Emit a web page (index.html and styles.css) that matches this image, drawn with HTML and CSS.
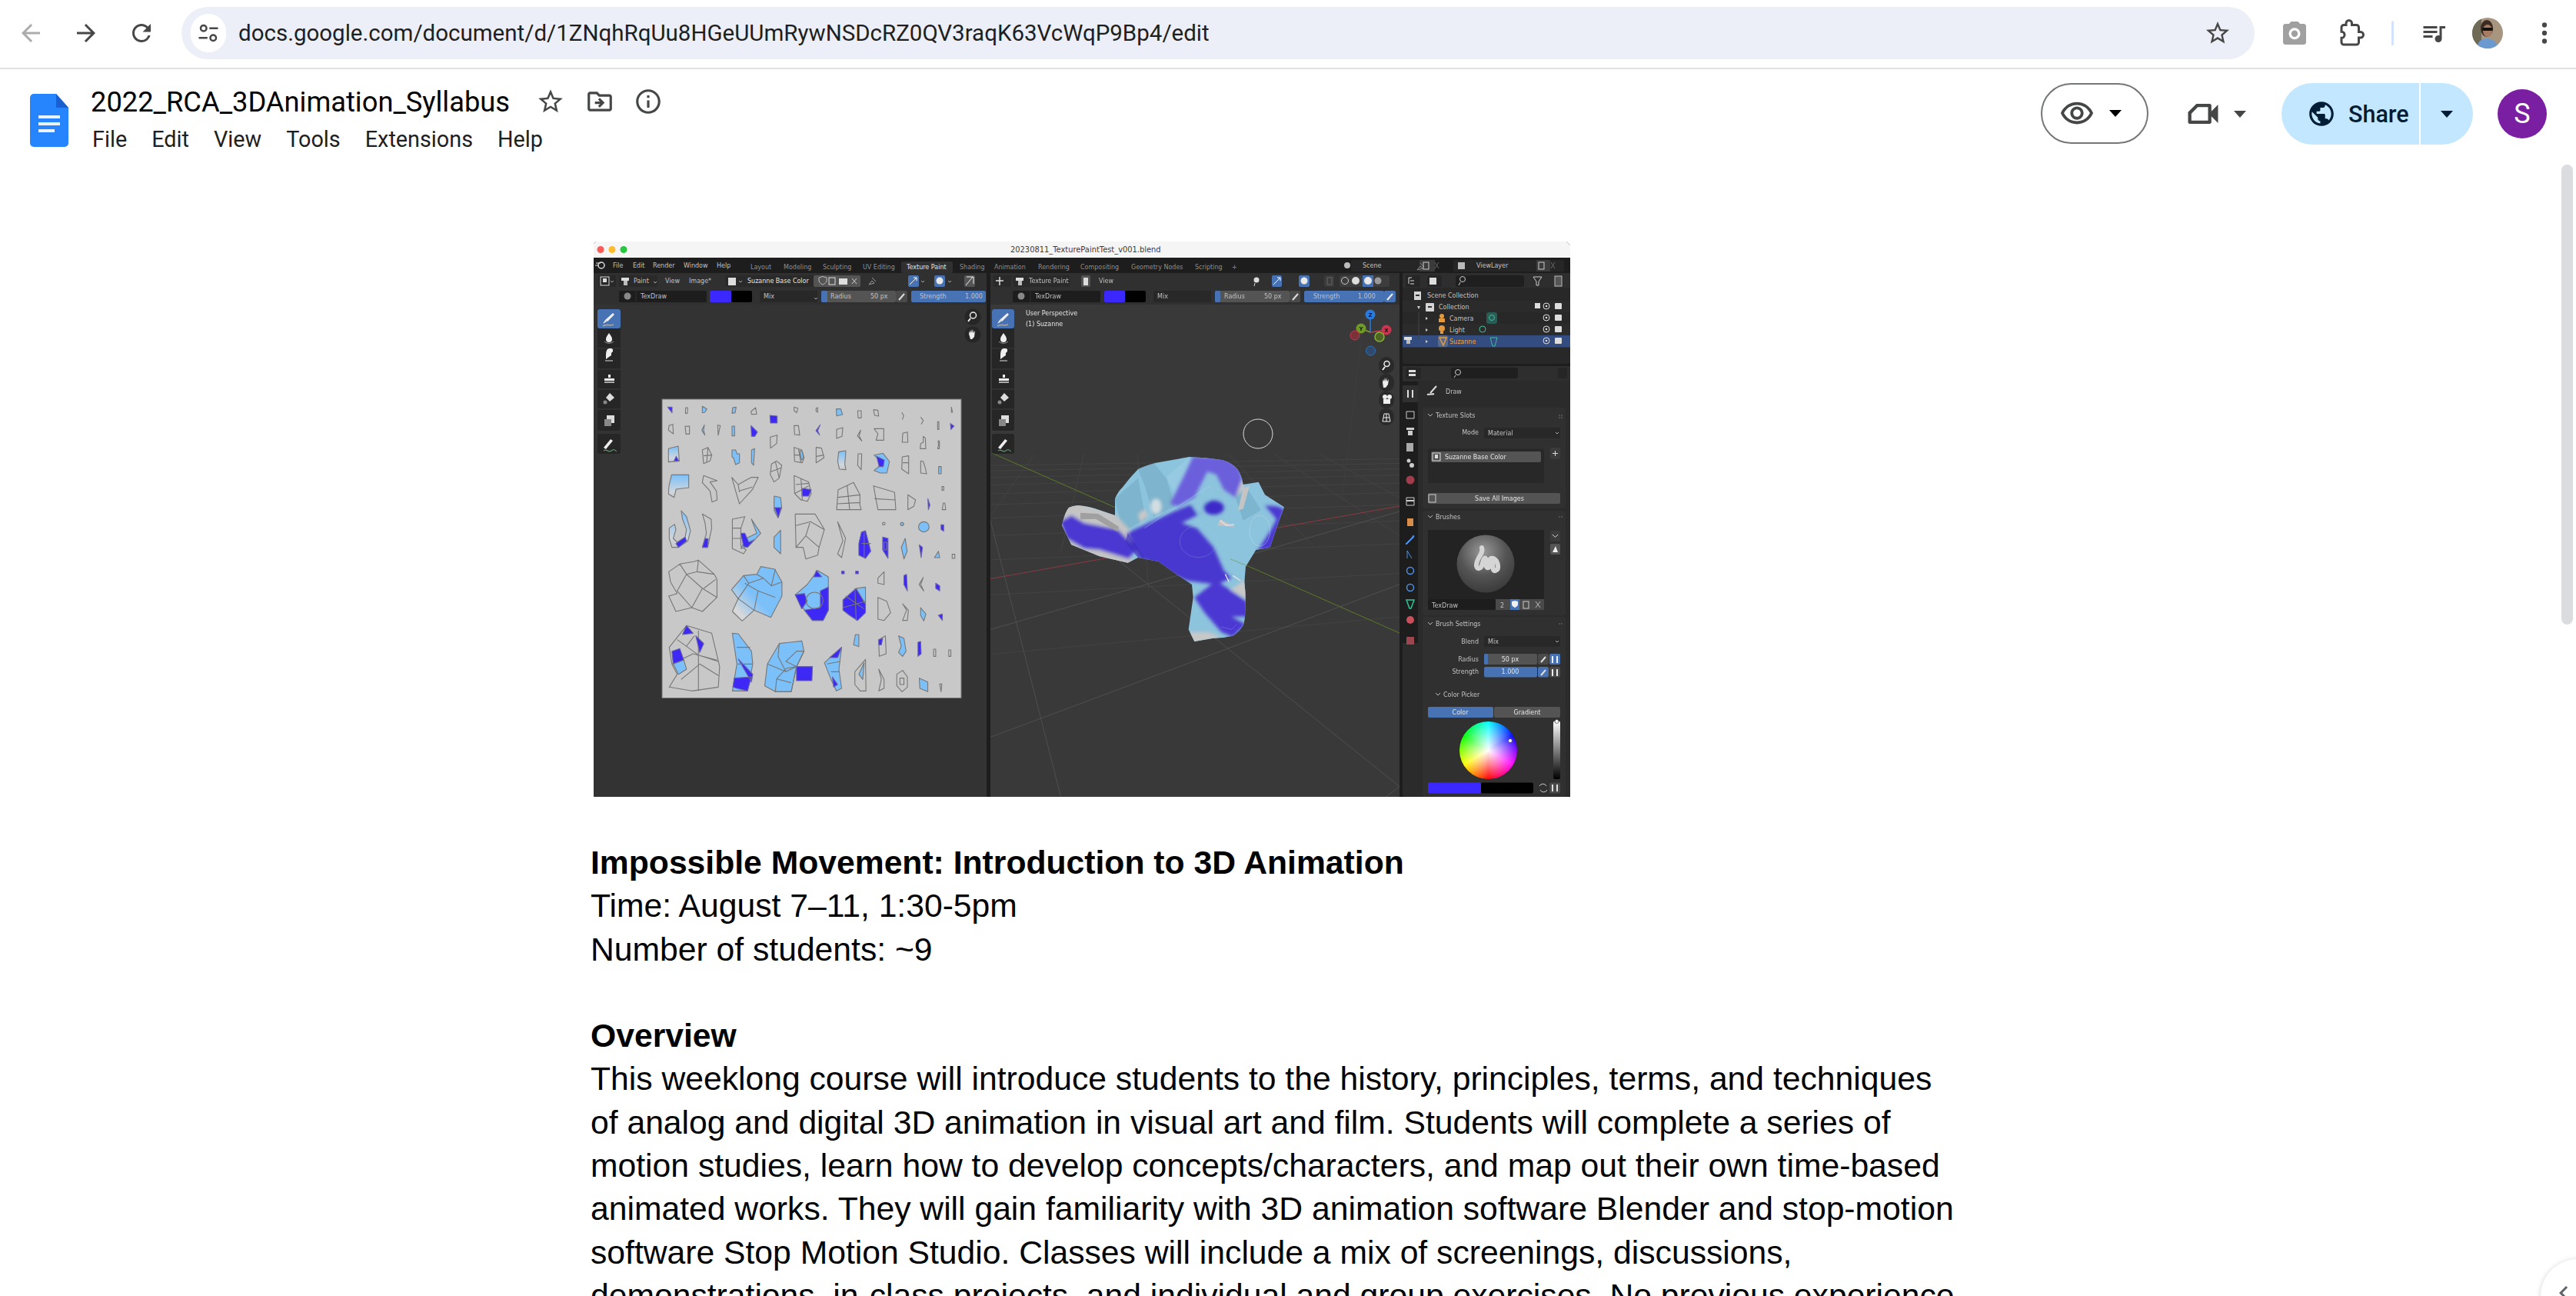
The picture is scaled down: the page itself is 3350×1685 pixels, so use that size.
FILE: index.html
```html
<!DOCTYPE html>
<html lang="en">
<head>
<meta charset="utf-8">
<title>2022_RCA_3DAnimation_Syllabus</title>
<link rel="stylesheet" href="styles.css">
</head>
<body>
<div class="app">
  <header class="chrome">
    <div class="nav">
      <button class="nbtn"><svg class="ic36 dis" viewBox="0 0 24 24"><path d="M20 11H7.83l5.59-5.59L12 4l-8 8 8 8 1.41-1.41L7.83 13H20v-2z"/></svg></button>
      <button class="nbtn"><svg class="ic36" viewBox="0 0 24 24"><path d="M12 4l-1.41 1.41L16.17 11H4v2h12.17l-5.58 5.59L12 20l8-8z"/></svg></button>
      <button class="nbtn"><svg class="ic36" viewBox="0 0 24 24"><path d="M17.65 6.35A7.958 7.958 0 0 0 12 4c-4.42 0-7.99 3.58-7.99 8s3.57 8 7.99 8c3.73 0 6.84-2.55 7.73-6h-2.08A5.99 5.99 0 0 1 12 18c-3.31 0-6-2.69-6-6s2.69-6 6-6c1.66 0 3.14.69 4.22 1.78L13 11h7V4l-2.35 2.35z"/></svg></button>
    </div>
    <div class="omni">
      <span class="chip"><svg class="ic30" viewBox="0 0 24 24"><circle cx="7" cy="7" r="3" fill="none" stroke="#474747" stroke-width="2"/><rect x="13" y="6" width="9" height="2"/><circle cx="17" cy="17" r="3" fill="none" stroke="#474747" stroke-width="2"/><rect x="2" y="16" width="9" height="2"/></svg></span>
      <span class="url">docs.google.com/document/d/1ZNqhRqUu8HGeUUmRywNSDcRZ0QV3raqK63VcWqP9Bp4/edit</span>
      <svg class="ic36 omni-star" viewBox="0 0 24 24"><path d="M22 9.24l-7.19-.62L12 2 9.19 8.63 2 9.24l5.46 4.73L5.82 21 12 17.27 18.18 21l-1.63-7.03L22 9.24zM12 15.4l-3.76 2.27 1-4.28-3.32-2.88 4.38-.38L12 6.1l1.71 4.04 4.38.38-3.32 2.88 1 4.28L12 15.4z"/></svg>
    </div>
    <div class="tools">
      <svg class="ic36 grey" viewBox="0 0 24 24"><path d="M9 2L7.17 4H4c-1.1 0-2 .9-2 2v14c0 1.1.9 2 2 2h16c1.1 0 2-.9 2-2V6c0-1.1-.9-2-2-2h-3.17L15 2H9zm3 15.5a5 5 0 1 1 0-10 5 5 0 0 1 0 10zm0-2.2a2.8 2.8 0 1 0 0-5.6 2.8 2.8 0 0 0 0 5.6z" fill-rule="evenodd"/></svg>
      <svg class="ic36 puzzle" viewBox="0 0 24 24"><path d="M20.5 11H19V7c0-1.1-.9-2-2-2h-4V3.5C13 2.12 11.88 1 10.5 1S8 2.12 8 3.5V5H6c-1.1 0-2 .9-2 2v3.8c1.5 0 2.7 1.2 2.7 2.7S5.500 16.200 4 16.200V20c0 1.100.9 2 2 2h11c1.100 0 2-.9 2-2v-4h1.500c1.380 0 2.500-1.120 2.500-2.500S21.880 11 20.500 11z"/></svg>
      <span class="vdiv"></span>
      <svg class="ic36 music" viewBox="0 0 24 24"><path d="M15 6H3v2h12V6zm0 4H3v2h12v-2zM3 16h8v-2H3v2zM17 6v8.180c-.31-.11-.65-.18-1-.18-1.660 0-3 1.340-3 3s1.340 3 3 3 3-1.340 3-3V8h3V6h-5z"/></svg>
      <svg class="photo" viewBox="0 0 40 40"><defs><clipPath id="pc"><circle cx="20" cy="20" r="20"/></clipPath></defs><g clip-path="url(#pc)"><rect width="40" height="40" fill="#a89580"/><rect width="12" height="40" fill="#6e6a55"/><path d="M6 40c1-10 7-13 13-13s13 3 14 13z" fill="#6b9ad0"/><ellipse cx="19" cy="14" rx="8" ry="11" fill="#3b2b22"/><ellipse cx="20" cy="17" rx="6" ry="8" fill="#a87c62"/><rect x="13" y="13" width="14" height="4" rx="2" fill="#14120f"/></g></svg>
      <svg class="ic36 dots" viewBox="0 0 24 24"><circle cx="12" cy="5" r="2.100"/><circle cx="12" cy="12" r="2.100"/><circle cx="12" cy="19" r="2.100"/></svg>
    </div>
  </header>

  <section class="docbar">
    <svg class="docs-logo" viewBox="0 0 50 69"><path d="M5 0h29l16 18v46a5 5 0 0 1-5 5H5a5 5 0 0 1-5-5V5a5 5 0 0 1 5-5z" fill="#2684fc"/><path d="M34 0l16 18H34z" fill="#1a5fcf"/><rect x="11" y="28" width="28" height="4" fill="#fff" opacity=".9"/><rect x="11" y="37" width="28" height="4" fill="#fff" opacity=".9"/><rect x="11" y="46" width="21" height="4" fill="#fff" opacity=".9"/></svg>
    <div class="titlecol">
      <div class="titlerow">
        <span class="doc-title">2022_RCA_3DAnimation_Syllabus</span>
        <svg class="ic38 tstar" viewBox="0 0 24 24"><path d="M22 9.24l-7.19-.62L12 2 9.19 8.63 2 9.24l5.46 4.73L5.82 21 12 17.27 18.18 21l-1.63-7.03L22 9.24zM12 15.4l-3.76 2.27 1-4.28-3.32-2.88 4.38-.38L12 6.1l1.71 4.04 4.38.38-3.32 2.88 1 4.28L12 15.4z"/></svg>
        <svg class="ic38 tmove" viewBox="0 0 24 24"><path d="M20 6h-8l-2-2H4c-1.100 0-2 .9-2 2v12c0 1.100.9 2 2 2h16c1.100 0 2-.9 2-2V8c0-1.100-.9-2-2-2zm0 12H4V6h5.170l2 2H20v10zm-8.010-9l-1.410 1.410L12.160 12H8v2h4.160l-1.590 1.590L11.990 17 16 13.010 11.990 9z"/></svg>
        <svg class="ic38 tinfo" viewBox="0 0 24 24"><path d="M11 7h2v2h-2zm0 4h2v6h-2zm1-9C6.480 2 2 6.480 2 12s4.480 10 10 10 10-4.480 10-10S17.520 2 12 2zm0 18c-4.410 0-8-3.590-8-8s3.590-8 8-8 8 3.590 8 8-3.590 8-8 8z"/></svg>
      </div>
      <nav class="menu"><span>File</span><span>Edit</span><span>View</span><span>Tools</span><span>Extensions</span><span>Help</span></nav>
    </div>
    <div class="actions">
      <div class="mode"><svg class="ic46" viewBox="0 0 24 24"><path d="M12 6c3.790 0 7.170 2.130 8.820 5.500C19.170 14.870 15.790 17 12 17s-7.170-2.130-8.820-5.500C4.830 8.130 8.210 6 12 6m0-2C7 4 2.730 7.110 1 11.500 2.730 15.890 7 19 12 19s9.270-3.110 11-7.500C21.270 7.110 17 4 12 4zm0 5c1.380 0 2.500 1.120 2.500 2.500S13.380 14 12 14s-2.500-1.120-2.500-2.500S10.620 9 12 9m0-2c-2.480 0-4.500 2.020-4.500 4.500S9.520 16 12 16s4.500-2.020 4.500-4.500S14.480 7 12 7z"/></svg><span class="caret black"></span></div>
      <div class="meet"><svg class="ic52" viewBox="0 0 24 24"><path d="M8 6h8c.55 0 1 .45 1 1v3.500l4-4v11l-4-4V17c0 .55-.45 1-1 1H4c-.55 0-1-.45-1-1v-6zm.85 2L5 11.850V16h10V8z" fill-rule="evenodd"/></svg><span class="caret"></span></div>
      <div class="share">
        <div class="share-main"><svg class="ic38 navy" viewBox="0 0 24 24"><path d="M12 2C6.480 2 2 6.480 2 12s4.480 10 10 10 10-4.480 10-10S17.520 2 12 2zm-1 17.930c-3.950-.49-7-3.850-7-7.930 0-.62.08-1.210.21-1.790L9 15v1c0 1.100.9 2 2 2v1.930zm6.900-2.540c-.26-.81-1-1.390-1.900-1.390h-1v-3c0-.55-.45-1-1-1H8v-2h2c.55 0 1-.45 1-1V7h2c1.100 0 2-.9 2-2v-.41c2.930 1.190 5 4.060 5 7.410 0 2.080-.8 3.970-2.100 5.390z"/></svg><span class="share-label">Share</span></div>
        <div class="share-more"><span class="caret navyc"></span></div>
      </div>
      <div class="acct">S</div>
    </div>
  </section>

  <main class="doc">
    <svg class="shot" viewBox="0 0 1270 722" width="1270" height="722" role="img" aria-label="Blender texture paint workspace">
      <defs>
        <clipPath id="shotclip"><path d="M3 0h1262l5 5v717H0V3z"/></clipPath>
        <clipPath id="vpclip"><rect x="516" y="82" width="532" height="640"/></clipPath>
        <linearGradient id="bf" x1="0" y1="0" x2="0" y2="1"><stop offset="0" stop-color="#7cc0fa"/><stop offset=".75" stop-color="#cfd6dc"/><stop offset="1" stop-color="#c8c8c8"/></linearGradient>
        <linearGradient id="wf" x1="1" y1="0" x2="0" y2="1"><stop offset="0" stop-color="#7cc0fa"/><stop offset=".55" stop-color="#7cc0fa"/><stop offset=".85" stop-color="#d8d8d8"/></linearGradient>
        <linearGradient id="vs" x1="0" y1="0" x2="0" y2="1"><stop offset="0" stop-color="#fff"/><stop offset="1" stop-color="#000"/></linearGradient>
        <radialGradient id="sph" cx=".45" cy=".3" r=".8"><stop offset="0" stop-color="#9a9a9a"/><stop offset=".5" stop-color="#555"/><stop offset="1" stop-color="#333"/></radialGradient>
        <filter id="soft" x="-20%" y="-20%" width="140%" height="140%"><feGaussianBlur stdDeviation="7"/></filter>
        <clipPath id="monk"><path d="M530 42Q600 45 660 55 695 65 718 90 735 115 740 150L800 140 825 190 900 238 870 320 845 395 790 405 750 470 745 530Q752 590 748 640 748 680 740 700 725 725 700 740 660 750 620 750L550 762 527 715 545 590 540 540 480 500 410 450 330 435 290 455 180 430 70 385 33 310Q45 255 60 240 80 230 100 232 140 235 180 250L240 270 240 205Q250 180 270 160 300 120 330 90 360 75 400 65z"/></clipPath>
      </defs>
      <g clip-path="url(#shotclip)">
      <rect width="1270" height="722" fill="#1d1d1d"/>
      <!-- title bar -->
      <rect width="1270" height="21" fill="#f5f5f5"/>
      <circle cx="9" cy="10.500" r="4.500" fill="#fc5b57"/><circle cx="24" cy="10.500" r="4.500" fill="#fdbc2e"/><circle cx="39" cy="10.500" r="4.500" fill="#27c83f"/>
      <text class="bt title" x="542" y="14">20230811_TexturePaintTest_v001.blend</text>
      <!-- top bar -->
      <g class="bt top">
        <text x="25" y="34">File</text><text x="51" y="34">Edit</text><text x="77" y="34">Render</text><text x="117" y="34">Window</text><text x="160" y="34">Help</text>
      </g>
      <rect x="400" y="26" width="67" height="15" rx="2" fill="#303030"/>
      <g class="bt tab">
        <text x="204" y="36">Layout</text><text x="247" y="36">Modeling</text><text x="298" y="36">Sculpting</text><text x="350" y="36">UV Editing</text>
        <text x="476" y="36">Shading</text><text x="521" y="36">Animation</text><text x="578" y="36">Rendering</text><text x="633" y="36">Compositing</text><text x="699" y="36">Geometry Nodes</text><text x="782" y="36">Scripting</text><text x="830" y="36">+</text>
      </g>
      <text class="bt on" x="407" y="36">Texture Paint</text>
      <circle cx="10" cy="31" r="4" fill="none" stroke="#ddd" stroke-width="1.500"/><path d="M3 28h6M2 31h4" stroke="#ddd"/>
      <rect x="985" y="24" width="98" height="15" rx="2" fill="#262626"/><circle cx="980" cy="31" r="4" fill="#bbb"/>
      <rect x="1118" y="24" width="144" height="15" rx="2" fill="#262626"/><rect x="1124" y="27" width="9" height="9" fill="#bbb"/>
      <rect x="1074" y="24" width="20" height="15" fill="#3b3b3b"/><rect x="1226" y="24" width="18" height="15" fill="#3b3b3b"/>
      <path d="M1071 37l4-5 3 3zM1075 28l5 5" fill="none" stroke="#888"/><rect x="1079" y="27" width="7" height="9" fill="none" stroke="#ccc"/><path d="M1094 27l5 8M1099 27l-5 8" stroke="#666"/>
      <rect x="1229" y="27" width="7" height="9" fill="none" stroke="#ccc"/><path d="M1245 27l5 8M1250 27l-5 8" stroke="#666"/>
      <text class="bt top" x="1000" y="34">Scene</text><text class="bt top" x="1148" y="34">ViewLayer</text>

      <!-- left image editor -->
      <rect x="0" y="41" width="511" height="681" fill="#333"/>
      <rect x="0" y="41" width="511" height="41" fill="#303030"/>
      <g>
        <rect x="6" y="44" width="23" height="15" rx="2" fill="#282828"/><rect x="9" y="46" width="11" height="11" fill="none" stroke="#ddd"/><rect x="12" y="48" width="5" height="5" fill="#ddd"/>
        <rect x="33" y="44" width="50" height="15" rx="2" fill="#2a2a2a"/><rect x="36" y="47" width="10" height="4" fill="#ddd"/><rect x="39" y="51" width="5" height="6" fill="#bbb"/>
        <rect x="171" y="44" width="24" height="15" rx="2" fill="#2a2a2a"/><rect x="175" y="47" width="10" height="10" fill="#ddd"/>
        <rect x="195" y="44" width="91" height="15" fill="#2a2a2a"/>
        <rect x="286" y="44" width="61" height="15" rx="2" fill="#545454"/>
        <path d="M293 47l5-1.500 5 1.500v4c0 3-5 5-5 5s-5-2-5-5z" fill="none" stroke="#bbb"/><rect x="306" y="47" width="8" height="9" fill="none" stroke="#ddd"/><rect x="319" y="48" width="11" height="8" fill="#ddd"/><path d="M336 48l6 7M342 48l-6 7" stroke="#ccc"/>
        <path d="M358 56l4-5 3 3zM362 47l5 5" fill="none" stroke="#999"/>
        <rect x="409" y="44" width="14" height="15" rx="2" fill="#4772b3"/><path d="M411 56l9-9M416 47h4v4" stroke="#fff" fill="none"/>
        <rect x="443" y="44" width="14" height="15" rx="2" fill="#4772b3"/><circle cx="450" cy="51" r="4.500" fill="#e8e8e8"/>
        <rect x="482" y="44" width="14" height="15" rx="2" fill="#555"/><path d="M484 57l9-11M485 46h9v9" stroke="#eee" fill="none"/>
        <rect x="33" y="64" width="114" height="15" rx="2" fill="#1d1d1d"/><circle cx="44" cy="71" r="4.500" fill="#888"/><line x1="55" y1="64" x2="55" y2="79" stroke="#303030"/>
        <rect x="151" y="64" width="28" height="15" rx="2" fill="#3b28ff"/><rect x="179" y="64" width="27" height="15" rx="2" fill="#000"/>
        <rect x="216" y="64" width="75" height="15" rx="2" fill="#282828"/>
        <rect x="296" y="64" width="97" height="15" rx="2" fill="#545454"/><rect x="296" y="64" width="8" height="15" rx="2" fill="#4772b3"/>
        <rect x="393" y="64" width="15" height="15" rx="2" fill="#4a4a4a"/><path d="M397 76l7-8" stroke="#ddd" stroke-width="2"/>
        <rect x="413" y="64" width="97" height="15" rx="2" fill="#4772b3"/>
      </g>
      <g class="bt top">
        <text x="52" y="54">Paint</text><text x="93" y="54">View</text><text x="124" y="54">Image*</text><text x="200" y="54" class="on">Suzanne Base Color</text>
        <text x="61" y="74">TexDraw</text><text x="221" y="74">Mix</text><text x="308" y="74">Radius</text><text x="360" y="74">50 px</text><text x="424" y="74">Strength</text><text x="483" y="74">1.000</text>
      </g>
      <g fill="none" stroke="#bbb" stroke-width=".9">
        <path d="M22 51l2 2 2-2M78 52l2 2 2-2M189 51l2 2 2-2M426 51l2 2 2-2M461 51l2 2 2-2M287 73l2 2 2-2"/>
      </g>
      <!-- left tools -->
      <rect x="5" y="88" width="30" height="158" rx="3" fill="#262626"/>
      <rect x="5" y="88" width="30" height="25" rx="3" fill="#4772b3"/>
      <path d="M5 139h30M5 166h30M5 192h30M5 218h30" stroke="#3a3a3a"/>
      <rect x="5" y="250" width="30" height="26" rx="3" fill="#262626"/>
      <g class="tl" id="toolicons">
        <path d="M12 107l3-5 2 2zM15 102l10-9 2 2-9 9z" fill="#eee"/><path d="M12 110c5-3 10 0 14-2" stroke="#aaa" fill="none" stroke-width="1.500"/>
        <path d="M20 119c3 4 4 6 4 8a4 4 0 0 1-8 0c0-2 1-4 4-8z" fill="#eee"/><path d="M14 130c3 3 9 3 12 0" stroke="#999" fill="none"/>
        <path d="M16 153c0-9 0-14 5-14s4 2 4 4l-2 2v3l-3 2z" fill="#eee"/><path d="M15 155h10" stroke="#ddd"/>
        <path d="M19 173h3v4h-3zM14 178h13v3H14z" fill="#eee"/><rect x="14" y="182" width="13" height="2" fill="#aaa"/>
        <path d="M21 197l6 6-6 5-5-5z" fill="#ddd"/><circle cx="15" cy="209" r="2.500" fill="#888"/>
        <rect x="17" y="226" width="10" height="10" fill="#ddd"/><rect x="14" y="231" width="9" height="9" fill="#888"/>
        <path d="M13 268l9-11 3 2-9 11z" fill="#eee"/><path d="M13 272c4-3 6 3 10 0s5 0 7 1" stroke="#7fbf90" fill="none"/>
      </g>
      <circle cx="493" cy="98" r="10.500" fill="#262626"/><circle cx="493.500" cy="96" r="4" fill="none" stroke="#eee" stroke-width="1.500"/><path d="M490 100l-3 4" stroke="#eee" stroke-width="2"/>
      <circle cx="493" cy="121" r="10.500" fill="#262626"/><path d="M488 120l1-4 1 3 1-5 1 5 1-5 1 5 2-3-1 8-3 3h-2z" fill="#eee"/>

      <!-- UV image -->
      <rect x="89" y="205" width="389" height="388.500" fill="#c8c8c8" stroke="#777"/>
      <g transform="translate(88 196) scale(.33333)" class="uv">
        <path class="p" d="M25 58h17v22z"/><path d="M95 60h8l-1 22h-8z"/><path class="b" d="M160 55l18 10-8 13-10 2z"/><path class="b" d="M278 60l14-2-4 22-12 2z"/><path d="M350 75l18-15 4 25-20 1z"/>
        <path class="p" d="M424 90l28 3v27h-26z"/><path d="M518 58l15 4-5 18-10-8z"/><path d="M604 62l6-2v18l-6-4z"/><path class="b" d="M683 65h17l7 22-23 5z"/><path d="M766 72h14v28h-12z"/><path d="M828 68l17 2 3 23-16-3z"/>
        <path d="M938 78l8 14-6 15M1012 97l10 13-8 15M1132 58l4 20h-4z"/>
        <path d="M30 130l15-5 2 37-19-14z"/><path d="M93 133l17-1v31H96z"/><path class="b" d="M168 128l-10 20 12 19-5-19z"/><path d="M220 128l10 2-8 38z"/><path class="b" d="M276 132h10v38h-10z"/><path class="p" d="M350 130l25 25-10 17h-13z"/>
        <path d="M518 130h17l5 37-20-2z"/><path class="p" d="M620 127l-17 23 15 17-8-17z"/><path d="M684 145l24-7-3 34-21 8z"/><path d="M778 148l-13 22 17 20-10-20z"/><path d="M830 142h38v45h-30l7-25z"/>
        <path d="M942 160l18-5 2 40h-22z"/><path d="M1022 172l8 6 2 42h-22l2-20 10-5z"/><path d="M1078 115h5v30h-5z"/><path class="p" d="M1128 122l14 10-12 13z"/><path d="M1080 190h5v30h-7l4-15z"/><path d="M425 175l27-8-2 33-24 18z"/>
        <path class="bf" d="M28 220l38-10 4 58-42 4z"/><path class="p" d="M58 250l10 18H50z"/><path d="M160 225l22-10 15 30-7 23-25 10zM165 248l30-3M182 215l-5 60"/><path class="b" d="M276 225h14l5 15h10v35l-15 7-8-25-6-5z"/><path class="b" d="M352 225l12-5-4 65-8-10z"/>
        <path d="M430 280l20-12 20 17-10 50-20 15-15-30zM428 310l40-15M445 270l15 65"/><path d="M518 215l30 10 9 30-7 20-30-5zM520 245l35 0M535 220l10 55"/><path class="b" d="M540 228l10 2 5 25-8 10z"/><path d="M604 215l21 3 10 37-31 20zM605 250l30-5"/><path class="bf" d="M692 232l28-4-4 52 4 22-25-2-7-30z"/><path d="M768 240h14l-2 62-14-17z"/>
        <path class="b" d="M830 245l35-7 25 32-10 45h-25l-25-10 25-20-5-20z"/><path class="p" d="M840 250l30 15-4 25h-16z"/><path d="M940 252l25-4v70l-27-18zM942 275l22 0"/><path d="M1012 268l10 2 8 25 5 23-23-3z"/><path class="b" d="M1082 290h10v28h-10z"/>
        <path class="bf" d="M30 365l10-43 67 0v50l-49 6-8 32-22-13z"/><path d="M165 325l53 20-28 5 25 35 3 35-20 8-8-43-30-33z"/><path d="M275 332l25 28 50-28h28l-23 48-50 55-15-50z"/><path d="M300 360l5 30M305 385l50-15"/>
        <path d="M518 325l57 25 10 45-15 30-25-5-25-25zM525 360l50-5M520 395l55-30M545 335l5 85"/><path class="p" d="M550 375l35 5-10 25-25 0z"/><path class="b" d="M440 405l25 5 5 40-15 40-15-30z"/><path class="p" d="M442 450h25l-10 38z"/>
        <path d="M690 380l60-28 25 48v40l5 18h-96zM690 410l85-10M686 435l90-5M725 365l10 93"/><path d="M828 365l82 25 5 68h-70zM832 415l82 5"/><path d="M962 400l30 20-7 25-23 13z"/><path class="p" d="M1040 415l8 25-6 18z"/><path d="M1095 368h7v14h-7z"/><path d="M1100 432h6l4 26h-14z"/>
      </g>
      <g transform="translate(-12 336) scale(.34483 .33333)" class="uv">
        <path class="bf" d="M365 42l20 23 15 55-10 40-35 25h-25l-10-35v-40l20-15 5 20-10 35 15 15 30-20 5-30-15-40z"/><path class="p" d="M345 170l35-25 5 15-30 25z"/>
        <path d="M445 55l33 20 2 35-15 75h-20l15-55-5-40z"/><path class="p" d="M455 150l12 2-3 33h-19z"/>
        <path d="M558 75l47-10-15 45v70l20 15-10 15-42-20zM560 110h30M560 150h30"/><path class="b" d="M630 75l35 55-45 50-30 10 20-40 40-20z"/><path class="p" d="M590 130l10 50 15 5 25-30-20 10-15-35z"/><path class="b" d="M715 145l25-27v92l-25-25z"/>
        <path d="M795 55h75l35 60-20 70-5 30-45 15-10-45h-27zM798 100l55-15 50 30M850 90l-15 50-37 45M835 140l50 45"/>
        <path d="M955 85l30 65-15 75-15-15 20-50z"/><path class="p" d="M1045 125l15-5 20 80-20 28-25-13v-45z"/><path d="M1045 170l35 0M1055 125v100"/>
        <circle class="b" cx="1280" cy="105" r="20"/><circle cx="1129" cy="92" r="5"/><circle class="b" cx="1198" cy="94" r="6"/><path class="p" d="M1345 97h10v25l-10-7z"/>
        <path class="p" d="M1125 145l20 5v78l-20-33z"/><path fill="#fff" d="M1130 165h10v30h-10z"/><path class="b" d="M1195 185l15-35 7 50-12 30z"/><path class="p" d="M1263 175l12 10-5 40z"/><path class="b" d="M1320 225l15-25 5 25z"/><path d="M1387 212h10v16h-10z"/>
        <path class="w" d="M318 280l42-30 55-10 15-5 60 55 10 20v70l-55 55-40-15-60 15-27-60 32-10-25-45zM360 250l25 40 40-10M385 290l-35 65 55 65 40-75-60-55M445 345l55 35M430 235l-5 45 65 10M495 310l-45 35"/>
        <path class="wf" d="M555 350l45-55 50-5 15-30 53 10 27 50v55l-42 83-63-28-45 42-37-37 22-50z"/><path d="M600 295l20 30-40 60 60 45 15-75-50-30M620 325l55-20 30 30 40-15M655 355l65 25M705 335l15-65M650 290l25 15"/>
        <path class="b" d="M795 370l45-40 40-55 40 25v130l-20 40h-40l-30-40z"/><path class="p" d="M795 370l35-5 10 30-20 30zM890 355l30-15v90l-20 40h-40l-30-40 60-10zM875 275l20 25h-30z"/><circle cx="868" cy="392" r="32" fill="#dcdcdc" stroke="#777"/>
        <path class="p" d="M975 390l50-45 35 60v35l-30 30-30-20-25-20z"/><path class="b" d="M1025 345l35-5v65z"/><path d="M985 375l70 50M1020 345l5 125M975 420l85-25"/><path class="p" d="M970 278h10v10h-10zM1023 278h10v10h-10z"/>
        <path d="M1130 280v50l-23-5v-20z"/><path class="p" d="M1205 295l10-5 3 65-13-25z"/><path d="M1278 302l-16 28 18 25-12-25z"/><path class="p" d="M1325 325l15 10v20l-15-10z"/><path d="M1107 380l33 15 15 45-25 30-23-5z"/><path d="M1200 405l22 25-4 40h-18l15-40z"/><path class="b" d="M1268 420l20 25-8 27-12-22z"/><path class="p" d="M1335 450l15-5v25z"/>
        <path d="M320 575l65-85 95 30 30 130-5 80-100 15-85-15 30-50-20-40z"/><path d="M350 545l80 60 75 25M430 510v235M330 640l80-40 90 25M365 700l70-60 70 45M385 570l30-40"/><path class="p" d="M330 590l30-10 15 45-40 15zM385 490l25 30-40 5zM420 530l30 30-15 35z"/><path class="b" d="M335 640l40-15 10 35-30 20z"/>
        <path class="b" d="M558 520l22 2 50 68 5 50-20 105h-57l17-105z"/><path class="p" d="M580 620l55 60-5 30zM565 695l65-5-15 55-40-10-15-5z"/><path d="M575 575l50 0M578 640h55"/>
        <path class="b" d="M735 560l85-10 8 40-28 60-20 98h-60l-40-23 10-85z"/><path fill="#fff" d="M800 650l-20 98h-60l5-50 35-40zM760 630l40-40 28 0-28 60z"/><path class="p" d="M800 650h60l-2 55h-58z"/><path d="M735 560l-5 50 30 60 40-20M690 640l70 30M725 698l55 15"/>
        <path class="b" d="M905 635l65-60-10 85 10 75-20 10-20-45z"/><path class="p" d="M925 615l45-40-15 40zM935 690l20 30-15 10z"/><path d="M915 640l50-10M930 670l30 0"/>
        <path class="b" d="M1022 525h13v47l-20-7z"/><path d="M1110 545l25-15 3 70-26 10z"/><path class="p" d="M1110 545l15-5-5 25h-10z"/><path class="b" d="M1185 530l20 10 8 50-13 20-15-15 10-25z"/><path class="p" d="M1258 555l10-3 2 48-12 10z"/><path d="M1317 582h8v28h-8zM1374 585h8v25h-8z"/>
        <path d="M1020 670l40-48 2 123h-22l-20-25z"/><path class="b" d="M1035 680l20-45-5 65z"/><path d="M1110 660l20 40v35l-20 10 10-45z"/><path d="M1178 680l22-15 18 25v40l-20 18-20-23zM1190 695h15v25h-15z"/><path class="b" d="M1263 695l32 15v38l-30-13z"/><path d="M1340 718h8l-3 30z"/>
      </g>

      <rect x="511" y="41" width="5" height="681" fill="#1d1d1d"/>

      <!-- viewport -->
      <rect x="516" y="41" width="532" height="681" fill="#393939"/>
      <g clip-path="url(#vpclip)" fill="none">
        <g transform="translate(508 186) scale(.49751 .35088)" class="gridm">
          <path d="M10 300L1086 275M10 320L1086 292M10 345L1086 312M10 372L1086 335M10 405L1086 365M10 445L1086 400M10 495L1086 445M10 560L1086 505M10 650L1086 590M10 780L1086 700M10 1000L1086 860"/>
          <path d="M130 260L10 500M260 260L200 620M400 260L430 760M520 260L640 660M640 260L860 600M760 260L1086 560M880 260L1086 420M20 260L10 270"/>
        </g>
        <g transform="translate(508 186) scale(.49751 .35088)" class="gridM">
          <path d="M10 470L200 1527M10 910L1086 470M10 1310L1086 740M340 640L1086 1490M1086 1490L1050 1527"/>
        </g>
        <path d="M513 439L1048 344" stroke="#8b3a44" stroke-width="1"/>
        <path d="M518 275L1048 509" stroke="#5a7a28" stroke-width="1"/>
        <path d="M1003 90L973 336" stroke="#3f3f3f"/>
      </g>
      <rect x="516" y="41" width="532" height="41" fill="#303030"/>
      <g>
        <rect x="520" y="44" width="23" height="15" rx="2" fill="#2a2a2a"/><path d="M528 46v11M523 51h10" stroke="#ddd" stroke-width="1.500"/>
        <rect x="546" y="44" width="73" height="15" rx="2" fill="#2a2a2a"/><rect x="549" y="47" width="10" height="4" fill="#ddd"/><rect x="552" y="51" width="5" height="6" fill="#bbb"/>
        <rect x="634" y="44" width="12" height="15" rx="2" fill="#545454"/><rect x="637" y="47" width="6" height="10" fill="#ddd"/>
        <circle cx="862" cy="50" r="3.500" fill="#ddd"/><path d="M860 54l-1 4" stroke="#ddd"/>
        <rect x="882" y="44" width="13" height="15" rx="2" fill="#4772b3"/><path d="M884 56l9-9M889 47h4v4" stroke="#fff" fill="none"/>
        <rect x="917" y="44" width="14" height="15" rx="2" fill="#4772b3"/><circle cx="924" cy="51" r="4.500" fill="#e8e8e8"/>
        <rect x="950" y="44" width="13" height="15" rx="2" fill="#3b3b3b"/><rect x="954" y="47" width="6" height="9" fill="none" stroke="#666"/>
        <rect x="970" y="44" width="65" height="15" rx="2" fill="#3d3d3d"/><rect x="1000" y="44" width="14" height="15" fill="#4772b3"/>
        <circle cx="977" cy="51" r="4.500" fill="none" stroke="#ccc"/><circle cx="991" cy="51" r="5" fill="#ddd"/><circle cx="1007" cy="51" r="5" fill="#e8e8e8"/><circle cx="1020" cy="51" r="4.500" fill="#999"/>
        <rect x="545" y="64" width="114" height="15" rx="2" fill="#1d1d1d"/><circle cx="556" cy="71" r="4.500" fill="#888"/><line x1="568" y1="64" x2="568" y2="79" stroke="#303030"/>
        <rect x="664" y="64" width="27" height="15" rx="2" fill="#3b28ff"/><rect x="691" y="64" width="27" height="15" rx="2" fill="#000"/>
        <rect x="728" y="64" width="75" height="15" rx="2" fill="#282828"/>
        <rect x="808" y="64" width="97" height="15" rx="2" fill="#545454"/><rect x="808" y="64" width="7" height="15" rx="2" fill="#4772b3"/>
        <rect x="905" y="64" width="14" height="15" rx="2" fill="#4a4a4a"/><path d="M909 76l7-8" stroke="#ddd" stroke-width="2"/>
        <rect x="924" y="64" width="104" height="15" rx="2" fill="#4772b3"/><rect x="1028" y="64" width="15" height="15" rx="2" fill="#4772b3"/><path d="M1032 76l7-8" stroke="#eee" stroke-width="2"/>
      </g>
      <g class="bt top">
        <text x="566" y="54">Texture Paint</text><text x="657" y="54">View</text>
        <text x="574" y="74">TexDraw</text><text x="733" y="74">Mix</text><text x="820" y="74">Radius</text><text x="872" y="74">50 px</text><text x="936" y="74">Strength</text><text x="994" y="74">1.000</text>
      </g>
      <g class="bt on"><text x="562" y="96">User Perspective</text><text x="562" y="110">(1) Suzanne</text></g>
      <!-- viewport tools -->
      <rect x="518" y="88" width="29" height="158" rx="3" fill="#262626"/>
      <rect x="518" y="88" width="29" height="25" rx="3" fill="#4772b3"/>
      <path d="M518 139h29M518 166h29M518 192h29M518 218h29" stroke="#3a3a3a"/>
      <rect x="518" y="250" width="29" height="26" rx="3" fill="#262626"/>
      <use href="#toolicons" x="513"/>
      <!-- gizmo -->
      <g>
        <path d="M1010 118V95" stroke-width="1.500" fill="none" stroke="#2a7be0"/>
        <path d="M1010 118L998 113" stroke="#7ca030" stroke-width="1.500"/><path d="M1010 118l21-3" stroke="#c23a4e" stroke-width="1.500"/>
        <circle cx="1010" cy="95" r="6.500" fill="#2a7be0"/><circle cx="998" cy="113" r="6.500" fill="#6f9a28"/><circle cx="1031" cy="115" r="6.500" fill="#c93550"/>
        <circle cx="990" cy="122" r="6" fill="#7a3138" stroke="#c93550"/><circle cx="1022" cy="124" r="6" fill="#4e6424" stroke="#8ab534" stroke-width="1.500"/><circle cx="1010.500" cy="142" r="6" fill="#2f4a6c" stroke="#2a70c4"/>
        <text class="bt giz" x="1010" y="98" text-anchor="middle">Z</text><text class="bt giz" x="998" y="116" text-anchor="middle">Y</text><text class="bt giz" x="1031" y="118" text-anchor="middle">X</text>
      </g>
      <rect x="1021" y="150" width="20" height="22" rx="10" fill="#2a2a2a"/><circle cx="1031.500" cy="159" r="3.500" fill="none" stroke="#eee" stroke-width="1.500"/><path d="M1029 163l-3 4" stroke="#eee" stroke-width="2"/>
      <rect x="1021" y="172" width="20" height="23" rx="10" fill="#2a2a2a"/><path d="M1026 183l1-4 1 3 1-5 1 5 1-5 1 5 2-3-1 7-3 4h-3z" fill="#eee"/>
      <rect x="1021" y="195" width="20" height="22" rx="10" fill="#2a2a2a"/><circle cx="1029" cy="202" r="3" fill="#eee"/><circle cx="1035" cy="202" r="3" fill="#eee"/><rect x="1027" y="205" width="9" height="6" fill="#eee"/>
      <rect x="1021" y="217" width="20" height="22" rx="10" fill="#2a2a2a"/><path d="M1026 234l2-10h6l2 10zM1027 229h8M1031 224v10" fill="none" stroke="#eee"/>
      <ellipse cx="864" cy="250" rx="19" ry="19" fill="none" stroke="#ddd" stroke-width="1"/>

      <!-- monkey -->
      <g transform="translate(598 266) scale(.33333)">
        <g clip-path="url(#monk)">
          <rect width="960" height="810" fill="#8cc3dd"/>
          <path d="M240 205l90-80 30 160-90 50zM330 90l60-25 50 60-80 40zM360 165l80-40 35 110-85 40z" fill="#5f94ac" opacity=".32"/>
          <path d="M700 170l60 0 50 80-70 40z" fill="#5f94ac" opacity=".3"/>
          <path d="M440 120L530 42l40 120-80 60z" fill="#a8d6ea" opacity=".35"/>
          <g filter="url(#soft)">
            <ellipse cx="400" cy="235" rx="22" ry="30" fill="#d2dde2"/>
            <path d="M20 225L100 220 240 265 300 330 310 470 180 450 60 405 20 350z" fill="#c4c4c4"/>
            <path d="M515 725l90 0 50 20-110 30zM690 560l60-40 10 80zM700 110l40 30 5 30-40 30-25-40zM340 300l30-30-15-25-25 20z" fill="#c8c8c8"/>
            <path d="M25 295l45-25 50 30 130 25 75 75-30 40-115-35-60-5-70-40z" fill="#4b38d2"/>
            <path d="M545 40l125 5 58 40 7 45-25 70-45-30-30-60-35-10-50 100-65 35-30-10 55-110z" fill="#6c5fdc"/>
            <path d="M285 340L360 305l110-50 75-30 35 35-80 40 60 20 65 75 40 90 30 30-60 25-115-15-75-30-105-60z" fill="#4a37cf"/>
            <path d="M535 225l65-20 5 30-40 35z" fill="#8cc3dd"/>
            <ellipse cx="625" cy="240" rx="40" ry="28" fill="#3c29c8"/>
            <path d="M550 590l85-65 60 40 65 45v55h-65l55 30-50 50-45-20-65-75z" fill="#4b38d2"/>
            <path d="M825 232l45 3 30 10-45 155-60 10 55-85 20-40z" fill="#4b38d2"/>
          </g>
          <path d="M105 260l70 4 80 50-5 20-85-50-60 2z" fill="#a0a0a0"/>
          <path d="M720 250l20-85 25-10-25 90zM650 285l60 30-70-5z" fill="#c4c4c4"/>
          <path d="M290 340l70 100-30-5-50-60z" fill="#3c2cbd" opacity=".6"/>
          <path d="M355 320l200-130 60-35" stroke="#a7dcef" stroke-width="2" fill="none" opacity=".7"/>
          <path d="M600 160l60 10 10 60M575 170l30-10" stroke="#c9c6ee" fill="none" opacity=".5"/>
          <ellipse cx="565" cy="372" rx="72" ry="62" fill="none" stroke="#a8d8ea" stroke-width="1.500" opacity=".45"/>
          <ellipse cx="805" cy="330" rx="40" ry="60" fill="none" stroke="#cfe5ef" stroke-width="2" opacity=".55"/>
          <path d="M650 290l25 20 30-5M700 505l30 20M670 500l15 30" stroke="#e4e4e4" stroke-width="4" fill="none"/>
          <path d="M690 440L980 560" stroke="#6d8b2c" stroke-width="2" opacity=".8"/>
          <path d="M655 705l40 10 20-20" stroke="#a8a4e8" fill="none"/>
        </g>
      </g>

      <rect x="1048" y="41" width="222" height="681" fill="#1d1d1d"/>
      <!-- outliner -->
      <rect x="1052" y="41" width="218" height="118" rx="3" fill="#282828"/>
      <rect x="1052" y="41" width="218" height="19" fill="#2e2e2e"/>
      <rect x="1052" y="77" width="218" height="15" fill="#2b2b2b"/><rect x="1052" y="107" width="218" height="15" fill="#2b2b2b"/>
      <rect x="1052" y="122" width="218" height="15.500" fill="#334d80"/>
      <rect x="1056" y="44" width="19" height="15" rx="2" fill="#262626"/><path d="M1060 47h4M1062 51h5M1062 55h5M1060 47v8" stroke="#ddd" fill="none"/>
      <rect x="1084" y="44" width="19" height="15" rx="2" fill="#262626"/><rect x="1087" y="47" width="9" height="9" fill="#ddd"/>
      <rect x="1121" y="44" width="89" height="15" rx="3" fill="#1f1f1f"/><circle cx="1130" cy="49" r="3.500" fill="none" stroke="#ccc"/><path d="M1127 53l-2 4" stroke="#ccc"/>
      <path d="M1222 46h11l-4 6v5h-3v-5z" fill="none" stroke="#ccc"/><rect x="1250" y="45" width="9" height="13" fill="#555" stroke="#bbb"/>
      <g class="bt top"><text x="1084" y="73">Scene Collection</text><text x="1099" y="88">Collection</text><text x="1113" y="103">Camera</text><text x="1113" y="118">Light</text></g>
      <text class="bt sel" x="1113" y="133">Suzanne</text>
      <rect x="1067" y="65" width="9" height="11" fill="#d5d5d5"/><rect x="1069" y="69" width="5" height="2" fill="#333"/><rect x="1082" y="80" width="11" height="11" rx="1" fill="#d5d5d5"/><rect x="1085" y="84" width="5" height="2" fill="#333"/>
      <path d="M1075 84l2 4 2-4zM1086 98v4l3-2zM1086 113v4l3-2zM1086 128v4l3-2z" fill="#ccc" transform="translate(-4 0)"/>
      <circle cx="1103" cy="97" r="3" fill="#e39a3e"/><rect x="1099" y="100" width="8" height="5" fill="#e39a3e"/>
      <rect x="1161" y="92" width="14" height="15" rx="3" fill="#2a5c55"/><circle cx="1168" cy="99" r="3.500" fill="none" stroke="#3fbfa0"/>
      <circle cx="1103" cy="113" r="4" fill="#e39a3e"/><rect x="1101" y="117" width="4" height="3" fill="#e39a3e"/><circle cx="1156" cy="114" r="4" fill="none" stroke="#3fbfa0"/>
      <rect x="1098" y="122" width="13" height="15" rx="3" fill="#5a6a8a"/><path d="M1100 125h9l-4 10z" fill="none" stroke="#e39a3e" stroke-width="1.500"/><path d="M1166 125h9l-3 11h-3z" fill="none" stroke="#3fbfa0"/>
      <rect x="1054" y="124" width="10" height="4" fill="#ddd"/><rect x="1057" y="128" width="5" height="5" fill="#bbb"/>
      <path d="M1224 80h7v7h-7z" fill="#ddd"/>
      <g fill="none" stroke="#ddd"><circle cx="1239" cy="84" r="4"/><circle cx="1239" cy="99" r="4"/><circle cx="1239" cy="114" r="4"/><circle cx="1239" cy="129" r="4"/></g>
      <g fill="#ddd"><circle cx="1239" cy="84" r="1.300"/><circle cx="1239" cy="99" r="1.300"/><circle cx="1239" cy="114" r="1.300"/><circle cx="1239" cy="129" r="1.300"/><rect x="1250" y="80" width="9" height="8" rx="1"/><rect x="1250" y="95" width="9" height="8" rx="1"/><rect x="1250" y="110" width="9" height="8" rx="1"/><rect x="1250" y="125" width="9" height="8" rx="1"/></g>
      <path d="M1073 92v35" stroke="#444"/>

      <!-- properties -->
      <rect x="1052" y="162" width="218" height="560" rx="3" fill="#2b2b2b"/>
      <rect x="1052" y="162" width="218" height="19" fill="#2e2e2e"/>
      <rect x="1056" y="164" width="20" height="15" rx="2" fill="#262626"/><rect x="1060" y="167" width="9" height="3" fill="#ddd"/><rect x="1060" y="172" width="9" height="3" fill="#ddd"/>
      <rect x="1115" y="164" width="87" height="14" rx="3" fill="#1f1f1f"/><circle cx="1124" cy="170" r="3.500" fill="none" stroke="#ccc"/><path d="M1121 174l-2 3" stroke="#ccc"/>
      <rect x="1254" y="164" width="12" height="14" rx="2" fill="#262626"/>
      <rect x="1052" y="182" width="20" height="340" fill="#1d1d1d"/>
      <rect x="1052" y="187" width="20" height="22" fill="#303030"/>
      <g fill="#bbb">
        <path d="M1058 193h2v10h-2zM1064 193h2v10h-2z" fill="#ddd"/>
        <path d="M1057 221h10v9h-10z" fill="none" stroke="#ccc"/><path d="M1057 242h10v3h-10zM1059 246h6v6h-6z" fill="#ccc"/>
        <path d="M1057 262h9v11h-9z" fill="#aaa"/><circle cx="1060" cy="285" r="2.500" fill="#ccc"/><circle cx="1064" cy="291" r="3" fill="#ccc"/>
        <circle cx="1062" cy="310" r="5.500" fill="#a03c4c"/><path d="M1057 333h10v10h-10z" fill="none" stroke="#ccc"/><rect x="1057" y="336" width="10" height="2" fill="#ccc"/>
        <rect x="1058" y="360" width="8" height="10" fill="#d98d4a"/><path d="M1056 393l8-8 2-3 1 2-2 2-8 8z" fill="#4f8fe0" stroke="#4f8fe0"/>
        <path d="M1058 402l6 10M1058 402v10" stroke="#4f8fe0" fill="none"/><circle cx="1062" cy="428" r="4.500" fill="none" stroke="#4f8fe0" stroke-width="1.500"/><circle cx="1062" cy="450" r="4.500" fill="none" stroke="#4f8fe0" stroke-width="1.500"/>
        <path d="M1057 466h10l-4 11h-2z" fill="none" stroke="#2fc79a" stroke-width="1.500"/><circle cx="1062" cy="492" r="5" fill="#c9505a"/>
        <rect x="1057" y="514" width="10" height="10" fill="#9c4650"/>
      </g>
      <path d="M1088 197l8-9M1084 199c3-1 7 0 9-1" stroke="#ddd" stroke-width="2" fill="none"/>
      <text class="bt top" x="1108" y="198">Draw</text>
      <!-- panels -->
      <rect x="1078" y="216" width="186" height="131" rx="3" fill="#303030"/>
      <rect x="1078" y="350" width="186" height="136" rx="3" fill="#303030"/>
      <rect x="1078" y="488" width="186" height="234" rx="3" fill="#303030"/>
      <g class="bt top"><text x="1095" y="229">Texture Slots</text><text x="1095" y="361">Brushes</text><text x="1095" y="500">Brush Settings</text><text x="1105" y="592">Color Picker</text></g>
      <path d="M1085 224l3 3 3-3M1085 356l3 3 3-3M1085 495l3 3 3-3M1095 587l3 3 3-3" fill="none" stroke="#bbb"/>
      <g class="bt top lab"><text x="1151" y="251" text-anchor="end">Mode</text><text x="1151" y="523" text-anchor="end">Blend</text><text x="1151" y="546" text-anchor="end">Radius</text><text x="1151" y="562" text-anchor="end">Strength</text></g>
      <rect x="1158" y="242" width="99" height="14" rx="2" fill="#282828"/><rect x="1158" y="513" width="99" height="14" rx="2" fill="#282828"/>
      <g class="bt top"><text x="1163" y="252">Material</text><text x="1163" y="523">Mix</text></g>
      <path d="M1251 248l2 2 2-2M1251 519l2 2 2-2" fill="none" stroke="#bbb" stroke-width=".9"/>
      <rect x="1085" y="269.500" width="151" height="44.500" rx="2" fill="#282828"/><rect x="1089" y="273" width="143" height="14" rx="2" fill="#545454"/>
      <rect x="1091" y="275" width="10" height="10" fill="none" stroke="#ddd"/><rect x="1094" y="277" width="4" height="5" fill="#ddd"/>
      <rect x="1244" y="268" width="13" height="15" rx="2" fill="#3b3b3b"/><path d="M1250.500 272v7M1247 275.500h7" stroke="#ddd"/>
      <rect x="1085" y="327" width="172" height="14" rx="2" fill="#545454"/><rect x="1086" y="329" width="9" height="10" fill="none" stroke="#ccc"/>
      <g class="bt on"><text x="1107" y="283">Suzanne Base Color</text></g>
      <text class="bt on" x="1178" y="337" text-anchor="middle">Save All Images</text>
      <rect x="1085" y="375" width="151" height="90" fill="#232323"/>
      <circle cx="1160" cy="419" r="37.500" fill="url(#sph)"/>
      <path d="M1155 398c3 8-8 14-7 24 1 5 6 3 7-1 2-6 3-11 5-9s-2 10 2 12 3-8 6-8-1 14 5 12 2-12 0-14-6-4-8 0" fill="none" stroke="#d5d5d5" stroke-width="6" stroke-linecap="round" stroke-linejoin="round"/>
      <rect x="1085" y="465" width="88" height="14" rx="2" fill="#1d1d1d"/><rect x="1173" y="465" width="63" height="14" fill="#4a4a4a"/><rect x="1192" y="465" width="12" height="14" fill="#4772b3"/>
      <path d="M1194 468l4-1 4 1v4c0 2-4 4-4 4s-4-2-4-4z" fill="#f0f0f0"/><rect x="1209" y="468" width="7" height="9" fill="none" stroke="#ccc"/><path d="M1225 468l6 8M1231 468l-6 8" stroke="#bbb"/>
      <text class="bt top" x="1090" y="476">TexDraw</text><text class="bt top" x="1179" y="476">2</text>
      <rect x="1244" y="376" width="13" height="14" rx="2" fill="#3b3b3b"/><path d="M1247 381l3.500 3.500 3.500-3.500" fill="none" stroke="#ddd"/><rect x="1244" y="393" width="13" height="14" rx="2" fill="#555"/><path d="M1247 404l4-8 3 8z" fill="#eee"/>
      <rect x="1158" y="536" width="69" height="14" rx="2" fill="#545454"/><rect x="1158" y="536" width="5" height="14" rx="2" fill="#4772b3"/>
      <rect x="1228" y="536" width="14" height="14" rx="2" fill="#4a4a4a"/><rect x="1243" y="536" width="14" height="14" rx="2" fill="#4772b3"/>
      <rect x="1158" y="553" width="69" height="13.500" rx="2" fill="#4772b3"/><rect x="1228" y="553" width="14" height="13.500" rx="2" fill="#4772b3"/><rect x="1243" y="553" width="14" height="13.500" rx="2" fill="#4a4a4a"/>
      <path d="M1232 547l6-7M1232 564l6-7" stroke="#ddd" stroke-width="2"/><path d="M1247 539v9M1253 539v9M1247 556v9M1253 556v9" stroke="#fff" stroke-width="1.800"/>
      <g class="bt on"><text x="1192" y="546" text-anchor="middle">50 px</text><text x="1192" y="562" text-anchor="middle">1.000</text></g>
      <rect x="1085" y="605" width="85" height="14" rx="2" fill="#4772b3"/><rect x="1171" y="605" width="86" height="14" rx="2" fill="#545454"/>
      <g class="bt on"><text x="1127" y="615" text-anchor="middle">Color</text><text x="1214" y="615" text-anchor="middle">Gradient</text></g>
      <foreignObject x="1125.500" y="623.500" width="75" height="75"><div class="wheel" xmlns="http://www.w3.org/1999/xhtml"></div></foreignObject>
      <circle cx="1192" cy="649" r="2.500" fill="#fff" stroke="#333" stroke-width=".7"/>
      <rect x="1248" y="623.500" width="9" height="75.500" rx="2" fill="url(#vs)"/><circle cx="1252.500" cy="624" r="2.500" fill="#fff" stroke="#333" stroke-width=".7"/>
      <rect x="1085" y="703.500" width="69" height="14" rx="2" fill="#3b28ff"/><rect x="1154" y="703.500" width="68" height="14" rx="2" fill="#000"/>
      <path d="M1230 708a5 5 0 0 1 9 0M1240 713a5 5 0 0 1-9 0" fill="none" stroke="#ccc"/><rect x="1243" y="703.500" width="14" height="14" rx="2" fill="#4a4a4a"/><path d="M1247 706v9M1253 706v9" stroke="#eee" stroke-width="1.800"/>
      <g fill="#777"><circle cx="1256" cy="226" r=".8"/><circle cx="1259" cy="226" r=".8"/><circle cx="1256" cy="229" r=".8"/><circle cx="1259" cy="229" r=".8"/><circle cx="1256" cy="358" r=".8"/><circle cx="1259" cy="358" r=".8"/><circle cx="1256" cy="497" r=".8"/><circle cx="1259" cy="497" r=".8"/></g>
      </g>
    </svg>

    <div class="text">
      <h1 class="h">Impossible Movement: Introduction to 3D Animation</h1>
      <p>Time: August 7–11, 1:30-5pm</p>
      <p>Number of students: ~9</p>
      <h2 class="h gap">Overview</h2>
      <p>This weeklong course will introduce students to the history, principles, terms, and techniques<br>of analog and digital 3D animation in visual art and film. Students will complete a series of<br>motion studies, learn how to develop concepts/characters, and map out their own time-based<br>animated works. They will gain familiarity with 3D animation software Blender and stop-motion<br>software Stop Motion Studio. Classes will include a mix of screenings, discussions,<br>demonstrations, in-class projects, and individual and group exercises. No previous experience</p>
    </div>
  </main>
</div>
<div class="scrollthumb"></div>
<div class="sidetoggle"><svg viewBox="0 0 24 24" class="chev"><path d="M15.410 7.410L14 6l-6 6 6 6 1.410-1.410L10.830 12z"/></svg></div>
</body>
</html>
```
FILE: styles.css
```css
* { box-sizing: border-box; }
html, body { margin: 0; height: 100%; overflow: hidden; background: #fff; }
body { font-family: Roboto, "Liberation Sans", sans-serif; color: #1f1f1f; width: 3350px; height: 1685px; position: relative; }
.app { display: flex; flex-direction: column; height: 1685px; overflow: hidden; }

/* browser toolbar */
.chrome { height: 90px; flex: none; display: flex; align-items: center; padding: 0 0 2px 4px; border-bottom: 2px solid #e1e1e1; }
.nav { display: flex; }
.nbtn { width: 72px; height: 68px; border: 0; background: none; padding: 0; display: flex; align-items: center; justify-content: center; }
.ic36 { width: 36px; height: 36px; fill: #474747; flex: none; display: block; }
.ic36.dis { fill: #acacac; }
.ic30 { width: 30px; height: 30px; fill: #474747; }
.ic38 { width: 38px; height: 38px; fill: #444746; flex: none; display: block; }
.ic46 { width: 46px; height: 46px; fill: #444746; flex: none; display: block; }
.ic52 { width: 52px; height: 52px; fill: #444746; flex: none; display: block; }
.omni { width: 2696px; height: 68px; margin-left: 16px; background: #eceff7; border-radius: 34px; display: flex; align-items: center; padding-left: 12px; }
.chip { width: 46px; height: 50px; border-radius: 25px; background: #fff; display: flex; align-items: center; justify-content: center; flex: none; }
.url { margin-left: 16px; font: 400 29.500px Roboto, sans-serif; color: #1f1f1f; white-space: nowrap; flex: 1; }
.omni-star { margin-right: 30px; }
.tools { display: flex; align-items: center; margin-left: 34px; }
.grey { fill: #a0a0a0; }
.puzzle { margin-left: 37px; fill: none; stroke: #474747; stroke-width: 2; }
.vdiv { width: 3px; height: 32px; background: #d3e3fd; margin-left: 35px; border-radius: 2px; }
.music { margin-left: 34px; }
.photo { width: 40px; height: 40px; margin-left: 32px; display: block; }
.dots { margin-left: 36px; }

/* doc header */
.docbar { height: 126px; flex: none; display: flex; padding: 18px 0 0 39px; position: relative; }
.docs-logo { width: 50px; height: 69px; margin-top: 14px; flex: none; }
.titlecol { margin-left: 29px; }
.titlerow { display: flex; align-items: center; height: 48px; }
.doc-title { font: 400 36.300px Roboto, sans-serif; color: #000; white-space: nowrap; }
.tstar { margin-left: 34px; }
.tmove { margin-left: 26px; }
.tinfo { margin-left: 25px; }
.menu { display: flex; gap: 32px; margin-top: 8px; font: 400 28.800px Roboto, sans-serif; color: #1f1f1f; padding-left: 2px; }
.actions { margin-left: auto; display: flex; align-items: flex-start; padding-right: 38px; }
.mode { width: 140px; height: 79px; border: 2.500px solid #747775; border-radius: 40px; display: flex; align-items: center; padding-left: 22px; gap: 19px; }
.caret { width: 0; height: 0; border-left: 8px solid transparent; border-right: 8px solid transparent; border-top: 9px solid #444746; flex: none; }
.caret.black { border-top-color: #000; }
.caret.navyc { border-top-color: #001d35; }
.meet { width: 173px; height: 80px; display: flex; align-items: center; padding-left: 45px; gap: 14px; }
.share { display: flex; width: 249px; height: 80px; border-radius: 40px; background: #c2e7ff; overflow: hidden; }
.share-main { width: 181px; display: flex; align-items: center; padding-left: 33px; border-right: 2px solid #fff; }
.navy { fill: #001d35; }
.share-label { font: 500 30.500px Roboto, sans-serif; color: #001d35; margin-left: 16px; }
.share-more { flex: 1; display: flex; align-items: center; justify-content: center; }
.acct { width: 64px; height: 64px; margin: 8px 0 0 32px; border-radius: 50%; background: #7b1fa2; color: #fff; font: 400 36px Roboto, sans-serif; display: flex; align-items: center; justify-content: center; }

/* document */
.doc { padding: 98px 0 0 768px; flex: 1; overflow: hidden; }
.shot { display: block; margin-left: 4px; filter: blur(.35px); }
.text { margin-top: 57px; font: 400 42.670px/56.300px "Liberation Sans", Arial, sans-serif; color: #000; white-space: nowrap; }
.text p, .text .h { margin: 0; font-size: inherit; line-height: inherit; }
.text .h { font-weight: 700; }
.text .gap { margin-top: 56.300px; }

/* floating chrome */
.scrollthumb { position: absolute; left: 3331px; top: 214px; width: 15px; height: 598px; border-radius: 8px; background: #dadce0; }
.sidetoggle { position: absolute; left: 3304px; top: 1637px; width: 96px; height: 96px; border-radius: 50%; background: #fff; box-shadow: 0 1px 6px rgba(60,64,67,.25); }
.chev { position: absolute; left: 12px; top: 26px; width: 36px; height: 36px; fill: #5f6368; }

/* blender screenshot */
.bt { font-family: "DejaVu Sans", sans-serif; font-size: 8px; fill: #c4c4c4; }
.bt.title { fill: #3a3a3a; font-size: 9.900px; }
.bt.top, .top .bt, .top text { fill: #c2c2c2; }
.tab text { fill: #8e8e8e; }
.bt.on, .on text, text.on { fill: #e6e6e6; }
.bt.sel { fill: #f0a23c; }
.bt.giz { font-size: 7px; font-weight: 700; fill: #161616; }
.uv path, .uv circle { fill: none; stroke: #777; stroke-width: 1.100px; vector-effect: non-scaling-stroke; stroke-linejoin: round; }
.uv .b { fill: #7cc0fa; }
.uv .p { fill: #3d28f5; stroke: #6a64a8; }
.uv .bf { fill: url(#bf); }
.uv .wf { fill: url(#wf); }
.gridm path { stroke: #434343; stroke-width: 1px; vector-effect: non-scaling-stroke; }
.gridM path { stroke: #4f4f4f; stroke-width: 1px; vector-effect: non-scaling-stroke; }
.wheel { width: 75px; height: 75px; border-radius: 50%; background: radial-gradient(circle, #fff 0, rgba(255,255,255,0) 72%), conic-gradient(#00ffff, #0000ff 60deg, #ff00ff 120deg, #ff0000 180deg, #ffff00 240deg, #00ff00 300deg, #00ffff); }
```
